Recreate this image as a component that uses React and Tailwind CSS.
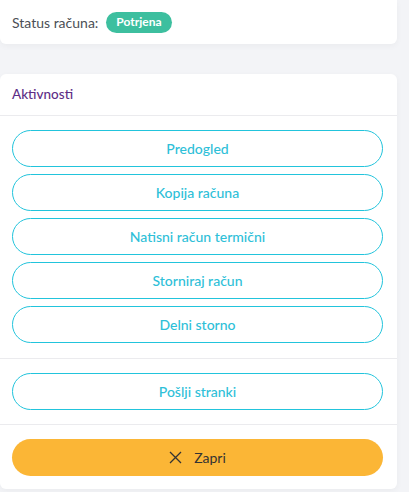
import React from "react";

const font = { fontFamily: "Lato, 'Noto Sans', sans-serif" };

function OutlineBtn({ children }) {
  return (
    <button className="h-[37px] w-full rounded-full border border-[#22c4dc] bg-white text-[14px] font-medium text-[#2ec0d8] flex items-center justify-center">
      {children}
    </button>
  );
}

export default function App() {
  return (
    <div className="min-h-screen bg-[#f3f4f7] pr-[12px]" style={font}>
      <div className="h-[44px] w-[397px] bg-white rounded-b-[6px] shadow-[0_2px_6px_rgba(0,0,0,0.04)] flex items-center px-3 gap-2">
        <span className="text-[14px] text-[#4b4f56]">Status računa:</span>
        <span className="h-[21px] px-[10px] rounded-full bg-[#3dbf9f] text-white text-[12px] font-bold flex items-center">
          Potrjena
        </span>
      </div>
      <div className="h-[30px]" />
      <div className="w-[397px] bg-white rounded-[6px] shadow-[0_2px_6px_rgba(0,0,0,0.04)]">
        <div className="h-[42px] pl-3 pr-[14px] flex items-center border-b border-[#ebebee] text-[13.5px] font-medium text-[#5e2d86]">
          Aktivnosti
        </div>
        <div className="pl-3 pr-[14px] pt-[14px] pb-[15px] flex flex-col gap-[7px] border-b border-[#ebebee]">
          <OutlineBtn>Predogled</OutlineBtn>
          <OutlineBtn>Kopija računa</OutlineBtn>
          <OutlineBtn>Natisni račun termični</OutlineBtn>
          <OutlineBtn>Storniraj račun</OutlineBtn>
          <OutlineBtn>Delni storno</OutlineBtn>
        </div>
        <div className="pl-3 pr-[14px] py-[14px] border-b border-[#ebebee]">
          <OutlineBtn>Pošlji stranki</OutlineBtn>
        </div>
        <div className="pl-3 pr-[14px] pt-[14px] pb-[13px]">
          <button className="h-[37px] w-full rounded-full bg-[#fbb636] text-[14px] text-[#333] flex items-center justify-center gap-[12px]">
            <svg width="13" height="13" viewBox="0 0 13 13" fill="none" stroke="#333" strokeWidth="1.3">
              <path d="M1 1L12 12M12 1L1 12" />
            </svg>
            Zapri
          </button>
        </div>
      </div>
    </div>
  );
}
